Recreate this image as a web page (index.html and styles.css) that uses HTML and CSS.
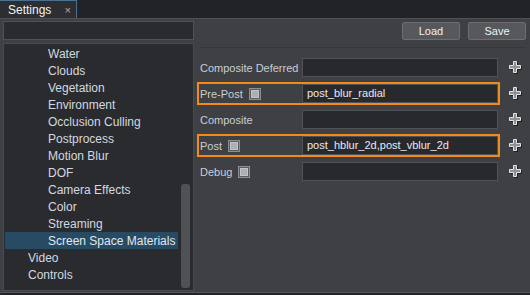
FILE: index.html
```html
<!DOCTYPE html>
<html>
<head>
<meta charset="utf-8">
<link rel="stylesheet" href="styles.css">
</head>
<body>
<div class="tabbar">
  <div class="tab"><span class="tab-title">Settings</span><span class="tab-close">×</span></div>
</div>
<div class="main">
  <div class="left">
    <div class="search"></div>
    <div class="tree">
      <ul class="list">
        <li class="item child">Water</li>
        <li class="item child">Clouds</li>
        <li class="item child">Vegetation</li>
        <li class="item child">Environment</li>
        <li class="item child">Occlusion Culling</li>
        <li class="item child">Postprocess</li>
        <li class="item child">Motion Blur</li>
        <li class="item child">DOF</li>
        <li class="item child">Camera Effects</li>
        <li class="item child">Color</li>
        <li class="item child">Streaming</li>
        <li class="item child selected">Screen Space Materials</li>
        <li class="item top">Video</li>
        <li class="item top">Controls</li>
      </ul>
      <div class="track"><div class="thumb"></div></div>
    </div>
  </div>
  <div class="right">
    <div class="toolbar">
      <button class="btn">Load</button>
      <button class="btn">Save</button>
    </div>
    <div class="sep"></div>
    <div class="rows">
      <div class="row">
        <div class="field"><div class="label">Composite Deferred</div><div class="input"></div></div>
        <svg class="plus" width="13" height="13" viewBox="0 0 13 13"><polygon class="plus-shadow" points="5.5,1.5 8.5,1.5 8.5,5.5 12.5,5.5 12.5,8.5 8.5,8.5 8.5,12.5 5.5,12.5 5.5,8.5 1.5,8.5 1.5,5.5 5.5,5.5"/><polygon class="plus-main" points="4.5,0.5 7.5,0.5 7.5,4.5 11.5,4.5 11.5,7.5 7.5,7.5 7.5,11.5 4.5,11.5 4.5,7.5 0.5,7.5 0.5,4.5 4.5,4.5"/></svg>
      </div>
      <div class="row">
        <div class="field hl"><div class="label">Pre-Post<span class="check"></span></div><div class="input">post_blur_radial</div></div>
        <svg class="plus" width="13" height="13" viewBox="0 0 13 13"><polygon class="plus-shadow" points="5.5,1.5 8.5,1.5 8.5,5.5 12.5,5.5 12.5,8.5 8.5,8.5 8.5,12.5 5.5,12.5 5.5,8.5 1.5,8.5 1.5,5.5 5.5,5.5"/><polygon class="plus-main" points="4.5,0.5 7.5,0.5 7.5,4.5 11.5,4.5 11.5,7.5 7.5,7.5 7.5,11.5 4.5,11.5 4.5,7.5 0.5,7.5 0.5,4.5 4.5,4.5"/></svg>
      </div>
      <div class="row">
        <div class="field"><div class="label">Composite</div><div class="input"></div></div>
        <svg class="plus" width="13" height="13" viewBox="0 0 13 13"><polygon class="plus-shadow" points="5.5,1.5 8.5,1.5 8.5,5.5 12.5,5.5 12.5,8.5 8.5,8.5 8.5,12.5 5.5,12.5 5.5,8.5 1.5,8.5 1.5,5.5 5.5,5.5"/><polygon class="plus-main" points="4.5,0.5 7.5,0.5 7.5,4.5 11.5,4.5 11.5,7.5 7.5,7.5 7.5,11.5 4.5,11.5 4.5,7.5 0.5,7.5 0.5,4.5 4.5,4.5"/></svg>
      </div>
      <div class="row">
        <div class="field hl"><div class="label">Post<span class="check"></span></div><div class="input">post_hblur_2d,post_vblur_2d</div></div>
        <svg class="plus" width="13" height="13" viewBox="0 0 13 13"><polygon class="plus-shadow" points="5.5,1.5 8.5,1.5 8.5,5.5 12.5,5.5 12.5,8.5 8.5,8.5 8.5,12.5 5.5,12.5 5.5,8.5 1.5,8.5 1.5,5.5 5.5,5.5"/><polygon class="plus-main" points="4.5,0.5 7.5,0.5 7.5,4.5 11.5,4.5 11.5,7.5 7.5,7.5 7.5,11.5 4.5,11.5 4.5,7.5 0.5,7.5 0.5,4.5 4.5,4.5"/></svg>
      </div>
      <div class="row">
        <div class="field"><div class="label">Debug<span class="check"></span></div><div class="input"></div></div>
        <svg class="plus" width="13" height="13" viewBox="0 0 13 13"><polygon class="plus-shadow" points="5.5,1.5 8.5,1.5 8.5,5.5 12.5,5.5 12.5,8.5 8.5,8.5 8.5,12.5 5.5,12.5 5.5,8.5 1.5,8.5 1.5,5.5 5.5,5.5"/><polygon class="plus-main" points="4.5,0.5 7.5,0.5 7.5,4.5 11.5,4.5 11.5,7.5 7.5,7.5 7.5,11.5 4.5,11.5 4.5,7.5 0.5,7.5 0.5,4.5 4.5,4.5"/></svg>
      </div>
    </div>
  </div>
</div>
</body>
</html>
```
FILE: styles.css
```css
* { box-sizing: border-box; }
html, body {
  margin: 0;
  padding: 0;
  width: 530px;
  height: 295px;
  overflow: hidden;
  background: #222327;
  font-family: "Liberation Sans", Arial, sans-serif;
}
.tabbar {
  height: 18px;
  display: flex;
}
.tab {
  width: 77px;
  height: 18px;
  background: #2c2e32;
  border-top: 1px solid #4a7190;
  border-right: 1px solid #4a7190;
  display: flex;
  align-items: center;
  justify-content: space-between;
  padding: 0 5px 0 8px;
}
.tab-title {
  color: #f2f4f6;
  font-size: 12px;
}
.tab-close {
  color: #a9adb2;
  font-size: 11px;
}
.main {
  height: 275px;
  background: #3f4044;
  border-top: 1px solid #505155;
  border-bottom: 1px solid #55565a;
  display: flex;
}
.left {
  width: 196px;
  padding: 2px 2px 0 3px;
  display: flex;
  flex-direction: column;
  gap: 3px;
}
.search {
  height: 19px;
  background: #2a2b2e;
  border: 1px solid #505155;
}
.tree {
  height: 248px;
  background: #2a2b2e;
  border: 1px solid #4a4b4f;
  display: flex;
}
.list {
  list-style: none;
  margin: 0;
  padding: 1px 0 0 1px;
  flex: 1;
}
.item {
  height: 17px;
  line-height: 18px;
  font-size: 12px;
  color: #d3d9e0;
  white-space: nowrap;
}
.item.child { padding-left: 43px; }
.item.top { padding-left: 23px; }
.item.selected { background: #284b64; color: #e2e8ee; }
.track {
  width: 15px;
  padding: 0 3px 2px 3px;
  display: flex;
  flex-direction: column;
  justify-content: flex-end;
}
.thumb {
  height: 104px;
  background: #505155;
  border-radius: 3px;
}
.right {
  flex: 1;
  display: flex;
  flex-direction: column;
}
.toolbar {
  display: flex;
  justify-content: flex-end;
  gap: 8px;
  padding: 3px 4px 0 0;
}
.btn {
  width: 58px;
  height: 18px;
  margin: 0;
  padding: 0;
  background: #56585c;
  border: 1px solid #6c6e72;
  border-radius: 2px;
  color: #eef1f4;
  font-family: "Liberation Sans", Arial, sans-serif;
  font-size: 11px;
  line-height: 16px;
}
.sep {
  height: 1px;
  margin: 7px 4px 0 4px;
  background: #36373b;
}
.rows {
  margin-top: 8px;
  display: flex;
  flex-direction: column;
  gap: 3px;
}
.row {
  display: flex;
  align-items: center;
  padding-left: 1px;
}
.field {
  width: 303px;
  height: 23px;
  border: 2px solid transparent;
  display: flex;
  align-items: center;
}
.field.hl { border-color: #f28a1a; }
.label {
  width: 103px;
  padding-left: 1px;
  font-size: 11px;
  color: #c8ced6;
  display: flex;
  align-items: center;
  gap: 6px;
  white-space: nowrap;
}
.check {
  width: 12px;
  height: 12px;
  border: 1px solid #8e8f92;
  background: #5a5b5f;
  display: flex;
  align-items: center;
  justify-content: center;
}
.check::after {
  content: "";
  width: 6px;
  height: 6px;
  background: #aeafb2;
  border: 1px solid #c4c5c8;
}
.input {
  width: 196px;
  height: 19px;
  background: #28292c;
  border: 1px solid #515256;
  color: #e8eaec;
  font-size: 11px;
  line-height: 17px;
  padding-left: 4px;
  white-space: nowrap;
}
.plus {
  margin-left: 9px;
  display: block;
}
.plus-shadow { fill: #1c1d1f; stroke: #1c1d1f; stroke-width: 1; }
.plus-main { fill: #8e9093; stroke: #e4e5e7; stroke-width: 1; }
```
